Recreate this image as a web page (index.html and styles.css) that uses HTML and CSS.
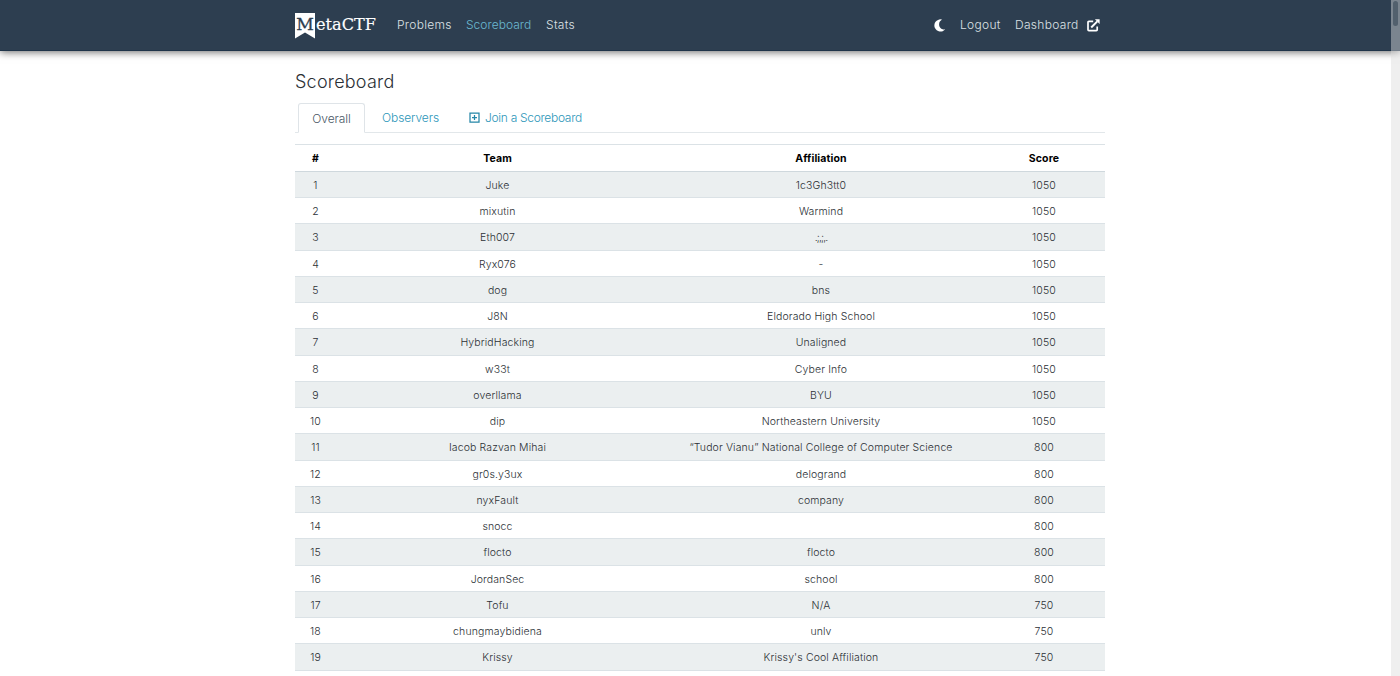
FILE: index.html
```
<!DOCTYPE html>
<html lang="en">
<head>
<meta charset="utf-8">
<title>Scoreboard</title>
<link rel="stylesheet" href="styles.css">
</head>
<body>
<header class="navbar">
  <div class="container nav-inner">
    <svg class="logo" width="82" height="27" viewBox="0 0 82 27" aria-label="MetaCTF">
      <path d="M0 0H20V25.5L10 19.5L0 25.5Z" fill="#fff"/>
      <text class="logo-m" x="1.2" y="17" textLength="17.6" lengthAdjust="spacingAndGlyphs">M</text>
      <text class="logo-rest" x="21" y="16.5" textLength="60" lengthAdjust="spacingAndGlyphs">etaCTF</text>
    </svg>
    <nav class="links">
      <a class="problems">Problems</a>
      <a class="active scoreboard">Scoreboard</a>
      <a class="stats">Stats</a>
    </nav>
    <div class="links account">
      <svg class="moon" width="12" height="13" viewBox="0 0 12 13"><path d="M7.1 .4A6.1 6.1 0 1 0 11.2 10.3C7.8 10.9 5.1 8.6 5.1 5.4C5.1 3.2 6.2 1.7 8.2 .6Z" fill="#fff"/></svg>
      <a class="logout">Logout</a>
      <a class="dashboard">Dashboard</a>
      <svg class="external" width="13" height="13" viewBox="0 0 13 13"><path d="M6.2 2.3H1.9Q1 2.3 1 3.2V10.8Q1 11.7 1.9 11.7H9.3Q10.2 11.7 10.2 10.8V7.6" fill="none" stroke="#fff" stroke-width="1.7"/><path d="M4.2 8.5L10.3 2.4" stroke="#fff" stroke-width="2"/><path d="M7.9 .3H12.6V5Z" fill="#fff"/></svg>
    </div>
  </div>
</header>
<main class="container">
  <h1>Scoreboard</h1>
  <div class="tabs">
    <a class="tab selected">Overall</a>
    <a class="tab observers">Observers</a>
    <a class="tab join"><svg width="11" height="11" viewBox="0 0 11 11"><path d="M1 1H10V10H1ZM5.5 3V8M3 5.5H8" fill="none" stroke="#2587a8" stroke-width="1.25"/></svg><span>Join a Scoreboard</span></a>
  </div>
  <table>
    <thead><tr><th>#</th><th>Team</th><th>Affiliation</th><th>Score</th></tr></thead>
    <tbody>
      <tr><td>1</td><td>Juke</td><td>1c3Gh3tt0</td><td>1050</td></tr>
      <tr><td>2</td><td>mixutin</td><td>Warmind</td><td>1050</td></tr>
      <tr><td>3</td><td>Eth007</td><td class="tight">.;,;,.</td><td>1050</td></tr>
      <tr><td>4</td><td>Ryx076</td><td>-</td><td>1050</td></tr>
      <tr><td>5</td><td>dog</td><td>bns</td><td>1050</td></tr>
      <tr><td>6</td><td>J8N</td><td>Eldorado High School</td><td>1050</td></tr>
      <tr><td>7</td><td>HybridHacking</td><td>Unaligned</td><td>1050</td></tr>
      <tr><td>8</td><td>w33t</td><td>Cyber Info</td><td>1050</td></tr>
      <tr><td>9</td><td>overllama</td><td>BYU</td><td>1050</td></tr>
      <tr><td>10</td><td>dip</td><td>Northeastern University</td><td>1050</td></tr>
      <tr><td>11</td><td>Iacob Razvan Mihai</td><td>“Tudor Vianu” National College of Computer Science</td><td>800</td></tr>
      <tr><td>12</td><td>gr0s.y3ux</td><td>delogrand</td><td>800</td></tr>
      <tr><td>13</td><td>nyxFault</td><td>company</td><td>800</td></tr>
      <tr><td>14</td><td>snocc</td><td></td><td>800</td></tr>
      <tr><td>15</td><td>flocto</td><td>flocto</td><td>800</td></tr>
      <tr><td>16</td><td>JordanSec</td><td>school</td><td>800</td></tr>
      <tr><td>17</td><td>Tofu</td><td>N/A</td><td>750</td></tr>
      <tr><td>18</td><td>chungmaybidiena</td><td>unlv</td><td>750</td></tr>
      <tr><td>19</td><td>Krissy</td><td>Krissy's Cool Affiliation</td><td>750</td></tr>
    </tbody>
  </table>
</main>
<div class="scrollbar"><div class="thumb"></div></div>
</body>
</html>
```
FILE: styles.css
```
* { box-sizing: border-box; }
body {
  margin: 0;
  height: 676px;
  overflow: hidden;
  background: #fff;
  color: #2b3035;
  font-family: Inter, "Open Sans", sans-serif;
  font-weight: 300;
}
.container { width: 810px; margin-left: 295px; }
.navbar {
  height: 51px;
  background: #2d3e50;
  border-bottom: 1px solid #1f3449;
  box-shadow: 0 1px 8px rgba(0, 0, 0, .6);
}
.nav-inner { display: flex; align-items: center; height: 50px; }
.logo { display: block; flex: none; margin-top: 3px; overflow: visible; }
.logo text { font-family: "DejaVu Serif", serif; font-size: 17px; font-weight: 400; }
.logo-m { fill: #2d3e50; stroke: #2d3e50; stroke-width: .3px; }
.logo-rest { fill: #fff; stroke: #fff; stroke-width: .15px; }
.links { display: flex; align-items: center; gap: 14px; margin-left: 20px; color: #dce1e5; font-size: 12px; white-space: nowrap; }
.links a { line-height: 20px; letter-spacing: .3px; }
.links .active { color: #6bb9d0; letter-spacing: .04px; }
.problems { width: 55px; }
.scoreboard { width: 66px; }
.account { margin-left: auto; gap: 0; padding-right: 5px; }
.moon { margin-right: 14px; }
.logout { width: 41px; margin-right: 14px; }
.dashboard { width: 64px; margin-right: 8px; }
h1 { margin: 20px 0 11px; font-size: 18px; line-height: 21px; font-weight: 300; letter-spacing: .22px; }
.tabs { display: flex; height: 30px; padding-left: 3px; border-bottom: 1px solid #e2e7ea; font-size: 12px; }
.tab { height: 30px; line-height: 30px; color: #2c96b9; letter-spacing: -.3px; white-space: nowrap; }
.selected { width: 67px; line-height: 29px; text-align: center; letter-spacing: -.1px; border: 1px solid #dfe4e8; border-bottom-color: #fff; border-radius: 3px 3px 0 0; background: #fff; color: #495765; }
.observers { margin-left: 17px; width: 87px; letter-spacing: -.1px; }
.join { display: flex; align-items: center; gap: 5px; }
.join svg { margin-top: -1px; }
table { display: block; margin-top: 11px; font-size: 10.5px; text-align: center; letter-spacing: .12px; }
thead, tbody { display: block; }
tr { display: grid; grid-template-columns: 41px 323px 324px 122px; height: 26.25px; border-bottom: 1px solid #dbe2e6; line-height: 27px; }
thead tr { height: 27.8px; border-top: 1px solid #dbe2e6; border-bottom-color: #cfd8dd; line-height: 27px; }
tbody tr:nth-child(odd) { background: #ebeff0; }
th, td { padding: 0; white-space: nowrap; }
th { color: #000; font-weight: 700; }
.tight { letter-spacing: -.9px; }
.scrollbar { position: absolute; top: 0; right: 0; width: 9px; height: 676px; background: rgba(220, 220, 220, .45); }
.thumb { width: 5px; height: 25px; margin: 1px 2px; border-radius: 3px; background: #52606d; }
```
